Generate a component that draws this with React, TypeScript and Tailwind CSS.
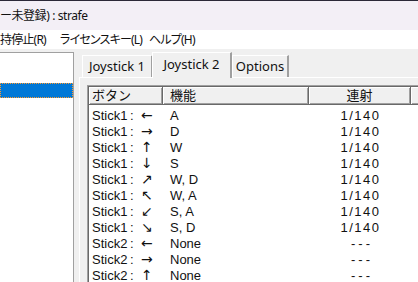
import React from 'react';

interface Row {
  stick: string;
  dir: string;
  func: string;
  rate: string;
}

const rows: Row[] = [
  { stick: 'Stick1', dir: '←', func: 'A', rate: '1/140' },
  { stick: 'Stick1', dir: '→', func: 'D', rate: '1/140' },
  { stick: 'Stick1', dir: '↑', func: 'W', rate: '1/140' },
  { stick: 'Stick1', dir: '↓', func: 'S', rate: '1/140' },
  { stick: 'Stick1', dir: '↗', func: 'W, D', rate: '1/140' },
  { stick: 'Stick1', dir: '↖', func: 'W, A', rate: '1/140' },
  { stick: 'Stick1', dir: '↙', func: 'S, A', rate: '1/140' },
  { stick: 'Stick1', dir: '↘', func: 'S, D', rate: '1/140' },
  { stick: 'Stick2', dir: '←', func: 'None', rate: '---' },
  { stick: 'Stick2', dir: '→', func: 'None', rate: '---' },
  { stick: 'Stick2', dir: '↑', func: 'None', rate: '---' },
];

const ui = "font-['Noto_Sans','Noto_Sans_CJK_JP',sans-serif]";
const list = "font-['Liberation_Sans','Noto_Sans_CJK_JP',sans-serif]";

/**
 * Classic Win32 header cell: white highlight top-left, dark edge bottom-right.
 */
function HeaderCell({ w, children, center }: { w: string; children?: React.ReactNode; center?: boolean }) {
  return (
    <div
      className={`${w} h-[18px] shrink-0 flex items-center bg-[#f0f0f0] border-r border-b border-[#696969] shadow-[inset_1px_1px_0_#ffffff,inset_-1px_-1px_0_#a0a0a0] text-[13px] leading-none ${
        center ? 'justify-center' : ''
      }`}
    >
      {children}
    </div>
  );
}

export default function App() {
  return (
    <div className={`w-[418px] h-[282px] overflow-hidden flex flex-col bg-[#f0f0f0] text-[#111] ${ui}`}>
      {/* title bar */}
      <div className="h-[30px] shrink-0 flex items-center bg-[#f3eff6] border-t border-[#2b2838] text-[12px] tracking-[-0.4px] whitespace-nowrap [font-feature-settings:'palt']">
        ー未登録) : strafe
      </div>

      {/* menu */}
      <div className="h-[19px] shrink-0 flex items-center bg-white text-[12px] tracking-[-0.8px] leading-none whitespace-nowrap [font-feature-settings:'palt']">
        <span className="w-[60px] shrink-0">持停止(R)</span>
        <span className="w-[89px] shrink-0">ライセンスキー(L)</span>
        <span>ヘルプ(H)</span>
      </div>

      <div className="flex-1 flex min-h-0">
        {/* left list box */}
        <div className="w-[74px] shrink-0 mt-[3px] bg-white border-t border-r border-[#a0a0a0] pt-[30px]">
          <div className="h-[15px] bg-[#0078d7] border border-dotted border-[#ff9a2e]" />
        </div>

        <div className="w-[5px] shrink-0" />

        {/* tab control */}
        <div className="flex-1 flex flex-col pt-[3px] min-w-0">
          <div className="h-[25px] shrink-0 flex items-end pl-[3px] text-[13px] whitespace-nowrap">
            <div className="w-[71px] h-[22px] shrink-0 flex items-center justify-center bg-[#f0f0f0] border-t border-l border-white border-r-2 border-r-[#a0a0a0]">
              Joystick 1
            </div>
            <div className="relative z-10 -mb-[1px] -ml-[1px] w-[80px] h-[26px] shrink-0 flex items-center justify-center bg-[#f0f0f0] border-t border-l border-white border-r-2 border-r-[#a0a0a0] pb-[2px]">
              Joystick 2
            </div>
            <div className="w-[57px] h-[22px] shrink-0 flex items-center justify-center bg-[#f0f0f0] border-t border-l border-white border-r-2 border-r-[#a0a0a0]">
              Options
            </div>
          </div>

          <div className="flex-1 border-t border-l border-white pl-[7px] pt-[7px] min-h-0">
            <div className="h-full bg-white border-t border-l border-[#a0a0a0]">
              <div className="h-full border-t border-l border-[#696969]">
                <div className={`flex ${ui}`}>
                  <HeaderCell w="w-[74px]">
                    <span className="pl-[3px]">ボタン</span>
                  </HeaderCell>
                  <HeaderCell w="w-[146px]">
                    <span className="pl-[7px]">機能</span>
                  </HeaderCell>
                  <HeaderCell w="w-[102px]" center>
                    連射
                  </HeaderCell>
                  <HeaderCell w="w-[40px]" />
                </div>
                <div className={`pt-[2px] text-[13px] leading-none ${list}`}>
                  {rows.map((r, i) => (
                    <div key={i} className="h-[16px] flex items-center">
                      <div className="w-[74px] shrink-0 flex items-center pl-[3px]">
                        <span className="w-[38px]">{r.stick}</span>
                        <span className="w-[11px]">:</span>
                        <span className="h-[14px] flex items-center font-['DejaVu_Sans',sans-serif] text-[14px] leading-none">
                          {r.dir}
                        </span>
                      </div>
                      <div className="w-[146px] shrink-0 pl-[7px]">{r.func}</div>
                      <div
                        className={`w-[102px] shrink-0 text-center pl-[1px] ${
                          r.rate === '---' ? 'tracking-[3px] pl-[4px]' : 'tracking-[1.5px]'
                        }`}
                      >
                        {r.rate}
                      </div>
                    </div>
                  ))}
                </div>
              </div>
            </div>
          </div>
        </div>
      </div>
    </div>
  );
}
